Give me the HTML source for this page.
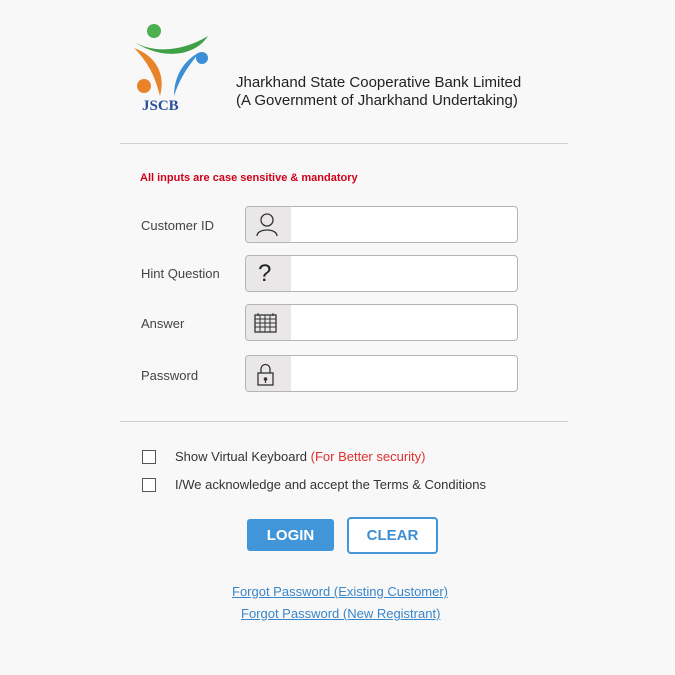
<!DOCTYPE html>
<html><head><style>
body{margin:0;width:675px;height:675px;background:#f8f8f8;font-family:"Liberation Sans",sans-serif;position:relative;overflow:hidden}
.a{position:absolute}
.hr{position:absolute;left:120px;width:448px;height:1px;background:#cfcfcf}
.lbl{position:absolute;left:141px;font-size:13px;color:#444}
.in{position:absolute;left:245px;width:271px;height:35px;border:1px solid #b4b4b4;border-radius:4px;background:#fff;overflow:hidden}
.ic{position:absolute;left:0;top:0;width:45px;height:35px;background:#e9e7e8}
.cb{position:absolute;left:142px;width:12px;height:12px;border:1px solid #555;background:#fff}
.lk{position:absolute;font-size:13px;color:#3a86c8;text-decoration:underline}
.btn{position:absolute;display:flex;align-items:center;justify-content:center;font-weight:bold;font-size:15px;box-sizing:border-box}
</style></head><body>
<svg class="a" style="left:128px;top:22px" width="84" height="92" viewBox="0 0 84 92">
<circle cx="26" cy="9" r="7" fill="#4caf50"/>
<path d="M4 18 C22 32 54 30 80 14 C66 36 30 38 4 18Z" fill="#3fa046"/>
<path d="M6 26 C28 34 38 52 32 74 C28 58 22 42 6 26Z" fill="#e8832a"/>
<circle cx="16" cy="64" r="7" fill="#e8832a"/>
<path d="M72 30 C56 38 46 54 46 74 C52 56 60 44 72 30Z" fill="#3b8fd6"/>
<circle cx="74" cy="36" r="6" fill="#3b8fd6"/>
<text x="14" y="88" font-family="Liberation Serif,serif" font-weight="bold" font-size="15" fill="#2b4e9b">JSCB</text>
</svg>
<div class="a" style="left:236px;top:74px;font-size:15px;color:#222;line-height:18px">Jharkhand State Cooperative Bank Limited<br>(A Government of Jharkhand Undertaking)</div>
<div class="hr" style="top:143px"></div>
<div class="a" style="left:140px;top:172px;font-size:11px;font-weight:bold;color:#d0021b">All inputs are case sensitive &amp; mandatory</div>
<div class="lbl" style="top:218px">Customer ID</div>
<div class="lbl" style="top:266px">Hint Question</div>
<div class="lbl" style="top:316px">Answer</div>
<div class="lbl" style="top:368px">Password</div>
<div class="in" style="top:206px"><div class="ic"><svg width="45" height="35"><circle cx="21" cy="13" r="6" fill="none" stroke="#333" stroke-width="1.3"/><path d="M11 29 C11 21 31 21 31 29" fill="none" stroke="#333" stroke-width="1.3"/></svg></div></div>
<div class="in" style="top:255px"><div class="ic"><div class="a" style="left:12px;top:4px;font-size:24px;color:#222">?</div></div></div>
<div class="in" style="top:304px"><div class="ic"><svg width="45" height="35"><rect x="9" y="10" width="21" height="17" fill="none" stroke="#333" stroke-width="1.3"/><path d="M9 14H30M9 18H30M9 22H30M14 10V27M19 10V27M24 10V27M12 8V11M27 8V11" stroke="#333" stroke-width="1"/></svg></div></div>
<div class="in" style="top:355px"><div class="ic"><svg width="45" height="35"><path d="M15 17V13a4.5 4.5 0 0 1 9 0V17" fill="none" stroke="#333" stroke-width="1.3"/><rect x="12" y="17" width="15" height="12" fill="none" stroke="#333" stroke-width="1.3"/><circle cx="19.5" cy="23" r="1.8" fill="#333"/><path d="M19.5 23V27" stroke="#333" stroke-width="1.2"/></svg></div></div>
<div class="hr" style="top:421px"></div>
<div class="cb" style="top:450px"></div>
<div class="a" style="left:175px;top:449px;font-size:13px;color:#333">Show Virtual Keyboard <span style="color:#e02f2f">(For Better security)</span></div>
<div class="cb" style="top:478px"></div>
<div class="a" style="left:175px;top:477px;font-size:13px;color:#333">I/We acknowledge and accept the Terms &amp; Conditions</div>
<div class="btn" style="left:247px;top:519px;width:87px;height:32px;background:#4096d8;border-radius:3px;color:#fff">LOGIN</div>
<div class="btn" style="left:347px;top:517px;width:91px;height:37px;border:2px solid #4096d8;border-radius:4px;background:#fff;color:#3d8fd2">CLEAR</div>
<div class="lk" style="left:232px;top:584px">Forgot Password (Existing Customer)</div>
<div class="lk" style="left:241px;top:606px">Forgot Password (New Registrant)</div>
</body></html>
